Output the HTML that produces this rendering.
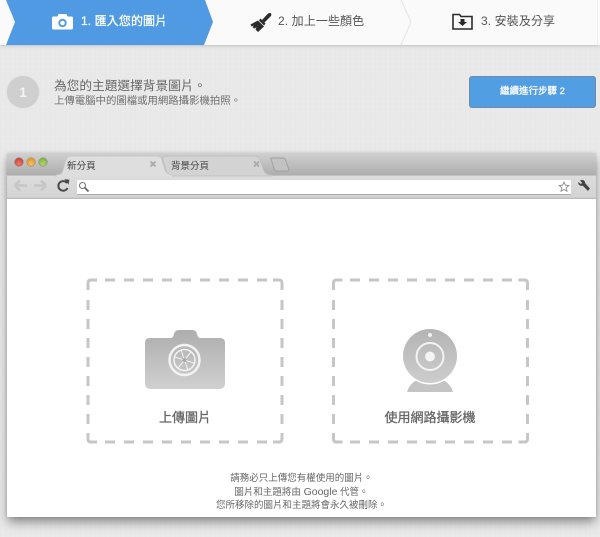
<!DOCTYPE html>
<html><head><meta charset="utf-8"><style>
html,body{margin:0;padding:0;background:#e9e9e9}
body{width:600px;height:537px;overflow:hidden;position:relative;
font-family:"Liberation Sans","Noto Sans CJK TC",sans-serif;}
#w{position:absolute;left:0;top:0;width:600px;height:537px;overflow:hidden;filter:blur(.35px);background-color:#e9e9e9;
background-image:repeating-linear-gradient(0deg,rgba(255,255,255,.06) 0 1px,transparent 1px 5px),repeating-linear-gradient(90deg,rgba(0,0,0,.008) 0 1px,transparent 1px 5px)}
.a{position:absolute;white-space:nowrap}
.c{text-align:center}
svg{position:absolute;display:block}
</style></head><body><div id="w">

<!-- top bar -->
<div class="a" style="left:0;top:0;width:600px;height:45px;background:#fafafa;box-shadow:0 1px 3px rgba(0,0,0,.18)"></div>
<svg style="left:0;top:0" width="600" height="46">
<polygon points="6,0 205,0 213,22 204,45 6,45 15,22" fill="#4f9ae2"/>
<polyline points="401,0 411,22 401,45" fill="none" stroke="#e4e4e4"/>
<line x1="597.5" y1="0" x2="597.5" y2="45" stroke="#eee"/>
</svg>
<!-- camera icon -->
<svg style="left:52px;top:13px" width="21" height="17" viewBox="0 0 21 17">
<path d="M1.500 3.500H5.500L6.500 1h8l1 2.500h4q1.500 0 1.500 1.500V15q0 1.500-1.500 1.500H1.500Q0 16.500 0 15V5q0-1.500 1.500-1.500z" fill="#fff"/>
<circle cx="10.500" cy="10" r="4.200" fill="#4f9ae2"/><circle cx="10.500" cy="10" r="2.300" fill="#fff"/>
</svg>
<div class="a" style="left:81px;top:13px;font-size:12px;line-height:17px;-webkit-text-stroke:.3px #fff;color:#fff;letter-spacing:.1px">1. 匯入您的圖片</div>
<!-- brush icon -->
<svg style="left:250px;top:12px" width="22" height="21" viewBox="0 0 22 21">
<path d="M12 8L18 1.500Q20 0.500 21 1.500T20.500 4.500L14.500 10.500z" fill="#2b2b2b"/>
<path d="M10.500 6.500L15.500 11.500L14 13.500L9 8.500z" fill="#2b2b2b"/>
<path d="M8 8.500L14 14.500L8 20L5.500 17.500L6.500 15.500L4 16.500L2.500 15L4 13.500L1.500 14.500L0.500 12.500z" fill="#2b2b2b"/>
</svg>
<div class="a" style="left:278px;top:13px;font-size:12px;line-height:17px;color:#555;letter-spacing:.1px">2. 加上一些顏色</div>
<!-- folder icon -->
<svg style="left:452px;top:13px" width="21" height="17" viewBox="0 0 21 17">
<path d="M1 16V1.500h6.500L9 3.500h11V16z" fill="#fafafa" stroke="#2b2b2b" stroke-width="1.600"/>
<path d="M8.500 6h4v3h2.500l-4.500 4-4.500-4h2.500z" fill="#2b2b2b"/>
</svg>
<div class="a" style="left:481px;top:13px;font-size:12px;line-height:17px;color:#555;letter-spacing:.1px">3. 安裝及分享</div>

<!-- step header -->
<div class="a c" style="left:7px;top:76px;width:32px;height:32px;border-radius:50%;background:#cfcfcf;box-shadow:0 0 0 1px #e2e2e2;color:#f4f4f4;font-weight:bold;font-size:14px;line-height:32px">1</div>
<div class="a" style="left:54px;top:77px;font-size:12.700px;line-height:18px;color:#666">為您的主題選擇背景圖片。</div>
<div class="a" style="left:54px;top:94px;font-size:10.400px;line-height:15px;color:#6e6e6e">上傳電腦中的圖檔或用網路攝影機拍照。</div>
<div class="a c" style="left:469px;top:76px;width:125px;height:30px;background:#529ee3;border:1px solid #6f8aa5;border-radius:3px;color:#fff;font-size:9.500px;-webkit-text-stroke:.25px #fff;line-height:30px">繼續進行步驟 2</div>

<!-- browser window -->
<div class="a" style="left:7px;top:153px;width:589px;height:364px;background:#fff;box-shadow:0 6px 10px -1px rgba(0,0,0,.42),0 0 3px rgba(0,0,0,.12)"></div>
<div class="a" style="left:7px;top:153px;width:589px;height:22px;background:linear-gradient(#d0d0d0,#aeaeae)"></div>
<div class="a" style="left:7px;top:175px;width:589px;height:24px;background:linear-gradient(#dcdcdc,#d4d4d4 90%,#b8b8b8);border-top:1px solid #c2c2c2;box-sizing:border-box"></div>

<!-- traffic lights -->
<div class="a" style="left:15px;top:158px;width:8px;height:8px;border-radius:50%;background:radial-gradient(circle at 50% 70%,#ee7a6c,#b53328);box-shadow:0 0 0 .5px #8a5a55"></div>
<div class="a" style="left:27px;top:158px;width:8px;height:8px;border-radius:50%;background:radial-gradient(circle at 50% 70%,#f7c25a,#d68321);box-shadow:0 0 0 .5px #9a7a4a"></div>
<div class="a" style="left:39px;top:158px;width:8px;height:8px;border-radius:50%;background:radial-gradient(circle at 50% 70%,#b4d770,#6f9f35);box-shadow:0 0 0 .5px #6f8a55"></div>

<!-- tabs -->
<svg style="left:50px;top:155px" width="240" height="22" viewBox="0 0 240 22">
<path d="M113 20Q118 20 116 15L113 5Q112 1 116 1H205Q209 1 210 5L214 16Q216 20 222 20V21H113z" fill="#d3d3d3" stroke="#bcbcbc" stroke-width=".8"/>
<path d="M6 20Q12 20 13 15L16 5Q17 1 21 1H107Q111 1 112 5L115 15Q117 20 123 20V22H6z" fill="#dedede" stroke="#c4c4c4" stroke-width=".8"/>
<rect x="7" y="20" width="115" height="2" fill="#dedede"/>
<path d="M221 4Q220 3 222 3H233Q235 3 235.500 5L239 15Q239 16 237 16H226Q225 16 224.500 15z" fill="#c2c2c2" stroke="#a0a0a0" stroke-linejoin="round"/>
<path d="M100.500 6.500l5 5M105.500 6.500l-5 5M204 6.500l5 5M209 6.500l-5 5" stroke="#a8a8a8" stroke-width="1.700"/>
</svg>
<div class="a" style="left:67px;top:160px;font-size:9.600px;line-height:13px;color:#444">新分頁</div>
<div class="a" style="left:171px;top:160px;font-size:9.500px;line-height:13px;color:#444">背景分頁</div>

<!-- toolbar -->
<svg style="left:12px;top:178px" width="70" height="16" viewBox="0 0 70 16">
<path d="M3 7.500H15M3 7.500L8 2.500M3 7.500L8 12.500" fill="none" stroke="#c6c6c6" stroke-width="2.600"/>
<path d="M34 7.500H22M34 7.500L29 2.500M34 7.500L29 12.500" fill="none" stroke="#c6c6c6" stroke-width="2.600"/>
<path d="M55 5A4.800 4.800 0 1 0 55.500 10" fill="none" stroke="#4a4a4a" stroke-width="2"/>
<path d="M52 1.500L57 1.500V6.500z" fill="#4a4a4a" transform="rotate(8 55 4)"/>
</svg>
<div class="a" style="left:77px;top:180px;width:494px;height:14px;background:#fff;border-bottom:1px solid #aaa;border-radius:1px"></div>
<svg style="left:78px;top:181px" width="12" height="12" viewBox="0 0 12 12">
<circle cx="4.500" cy="4.500" r="3" fill="none" stroke="#777" stroke-width="1.100"/>
<path d="M6.800 6.800L10.500 10.500" stroke="#666" stroke-width="1.800"/>
</svg>
<svg style="left:558px;top:181px" width="12" height="12" viewBox="0 0 12 12">
<path d="M6 1l1.400 3.200 3.400.3-2.600 2.300.8 3.400L6 8.400 3 10.200l.8-3.400L1.200 4.500l3.400-.3z" fill="#fff" stroke="#888" stroke-width=".9"/>
</svg>
<svg style="left:577px;top:179px" width="14" height="14" viewBox="0 0 14 14">
<path d="M1.500 3.500L4 5.500 5.500 4 3.500 1.500Q6 0.500 7.500 2.500L8 4.500 12.500 9.500 11 11.500 6 6.500 3.500 6.500Q1.500 5.500 1.500 3.500z" fill="#444" stroke="#444" stroke-width=".6" stroke-linejoin="round"/>
</svg>

<!-- dashed boxes -->
<svg style="left:80px;top:270px" width="460" height="180" fill="none" stroke="#c6c6c6" stroke-width="3">
<path d="M8 20V13q0-3 3-3H17M193 10H199q3 0 3 3V20M202 163V169q0 3-3 3H193M17 172H11q-3 0-3-3V163"/>
<path d="M25 10H187M25 172H187M8 30V155M202 30V155" stroke-dasharray="10 9"/>
<path d="M253.500 20V13q0-3 3-3H262.500M438.500 10H444.500q3 0 3 3V20M447.500 163V169q0 3-3 3H438.500M262.500 172H256.500q-3 0-3-3V163"/>
<path d="M270 10H432M270 172H432M253.500 30V155M447.500 30V155" stroke-dasharray="10 9"/>
</svg>

<!-- big camera -->
<svg style="left:145px;top:329px" width="80" height="61" viewBox="0 0 80 61">
<defs><linearGradient id="g" x1="0" y1="0" x2="0" y2="1"><stop offset="0" stop-color="#adadad"/><stop offset="1" stop-color="#d0d0d0"/></linearGradient></defs>
<path d="M5 9H26Q28 9 29 5Q30 1 34 1H47Q51 1 52 5Q53 9 55 9H75Q80 9 80 14V54Q80 60 74 60H6Q0 60 0 54V14Q0 9 5 9z" fill="url(#g)"/>
<circle cx="39.500" cy="31" r="15" fill="none" stroke="#f2f2f2" stroke-width="2.500"/>
<circle cx="39.500" cy="31" r="10.500" fill="none" stroke="#f2f2f2" stroke-width="1.500"/>
<path d="M39.500 31L36 21M39.500 31L30 28M39.500 31L33 39M39.500 31L43 41M39.500 31L49 34M39.500 31L46 23" stroke="#f2f2f2" stroke-width="1"/>
<circle cx="39.500" cy="31" r="2" fill="#aaa"/>
</svg>
<div class="a c" style="left:85px;top:408px;width:200px;font-size:13px;line-height:19px;-webkit-text-stroke:.3px #666;color:#666">上傳圖片</div>

<!-- webcam -->
<svg style="left:402px;top:329px" width="56" height="64" viewBox="0 0 56 64">
<defs><linearGradient id="h" x1="0" y1="0" x2="0" y2="1"><stop offset="0" stop-color="#b4b4b4"/><stop offset="1" stop-color="#cdcdcd"/></linearGradient></defs>
<path d="M5 63Q7 56 13 52H43Q49 56 51 63z" fill="#c4c4c4"/>
<circle cx="28" cy="27" r="28.500" fill="#fff"/>
<circle cx="28" cy="27" r="27" fill="url(#h)"/>
<circle cx="28" cy="6" r="2" fill="#f2f2f2"/>
<circle cx="28" cy="27.500" r="13.500" fill="none" stroke="#f2f2f2" stroke-width="2"/>
<circle cx="28" cy="27.500" r="5" fill="#f4f4f4"/>
</svg>
<div class="a c" style="left:330px;top:408px;width:200px;font-size:13px;line-height:19px;-webkit-text-stroke:.3px #666;color:#666">使用網路攝影機</div>

<!-- footer -->
<div class="a c" style="left:7px;top:472px;width:589px;font-size:9.500px;line-height:13.500px;color:#666">請務必只上傳您有權使用的圖片。<br>圖片和主題將由 <span style="font-size:10.500px">Google</span> 代管。<br>您所移除的圖片和主題將會永久被刪除。</div>

</div></body></html>
